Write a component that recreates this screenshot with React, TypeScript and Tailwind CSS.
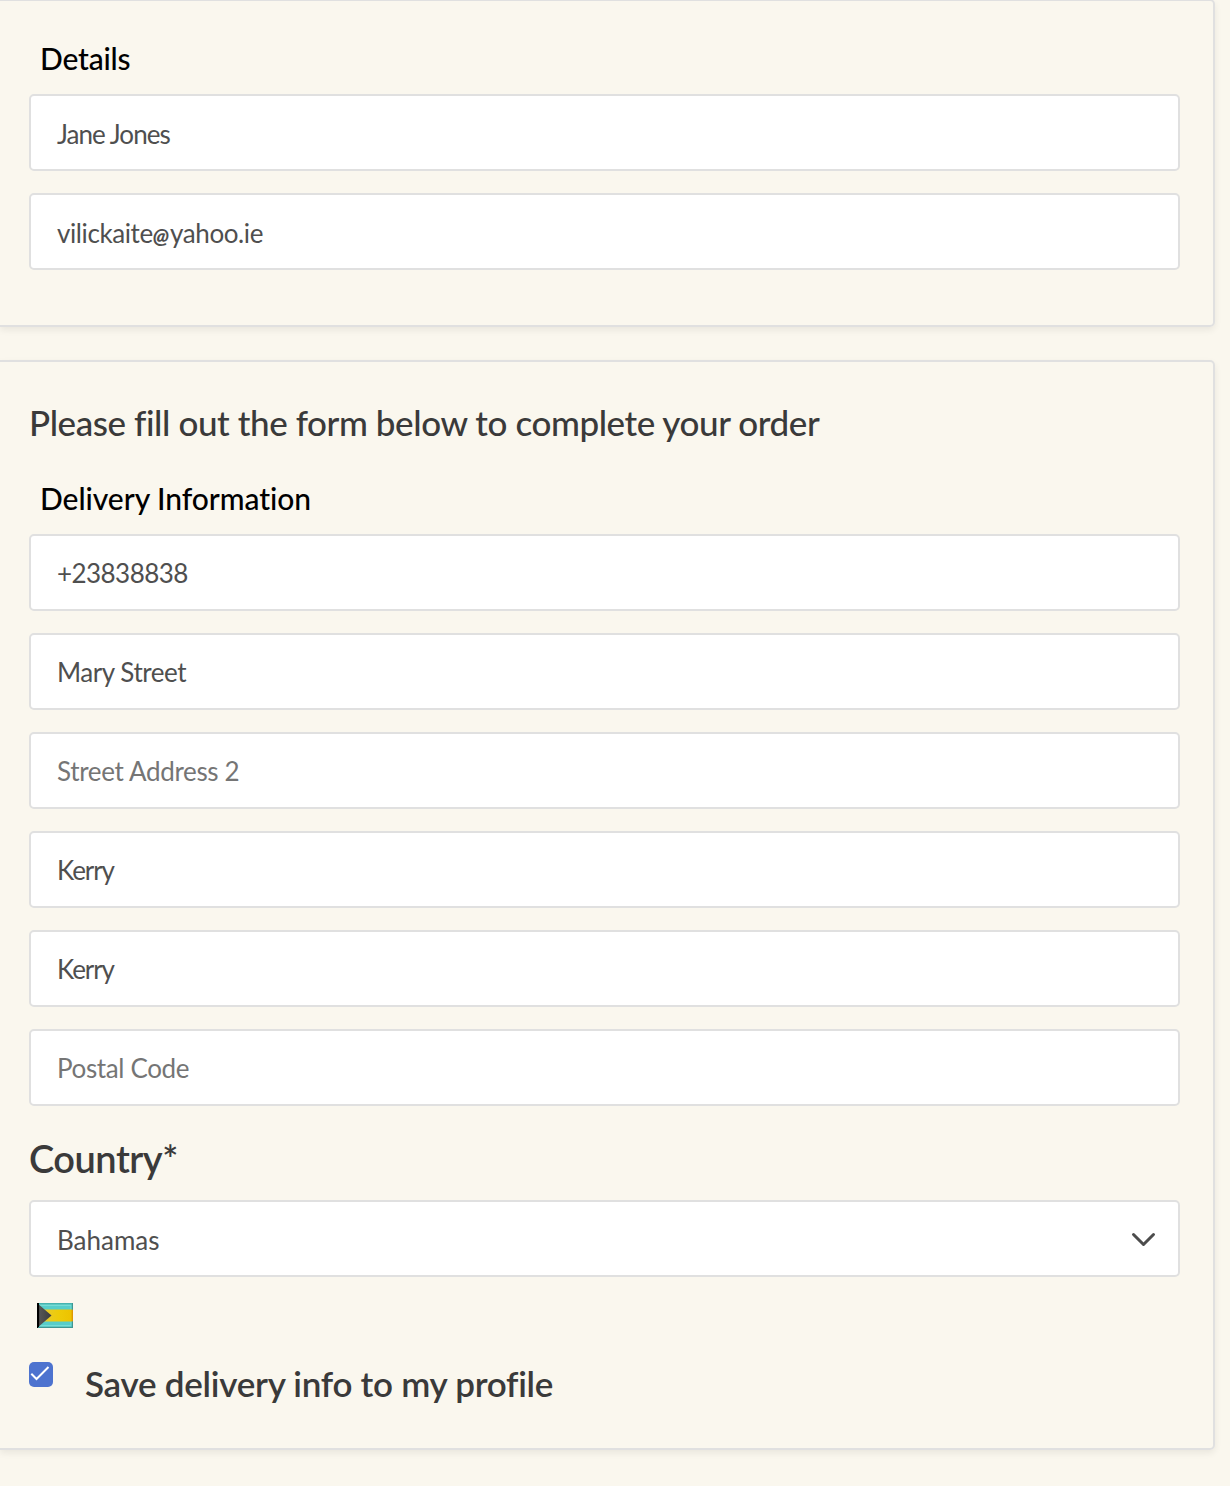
const card = "w-[1215px] border-2 border-l-0 border-[#e0e0e0] rounded-r-[5px] pl-[29px] pr-[33px] shadow-[0_3px_7px_rgba(0,0,0,0.07)]";
const box = "flex h-[77px] shrink-0 items-center justify-between rounded-[5px] border-2 border-[#e0e0e0] bg-white pl-[26px] pr-[22px] text-[26px] leading-none whitespace-nowrap";

function Field({ text, muted = false, tracking = "" }: { text: string; muted?: boolean; tracking?: string }) {
  return (
    <div className={`${box} ${muted ? "text-[#757575]" : "text-[#4f4f4f]"}`}>
      <span className={tracking}>{text}</span>
    </div>
  );
}

function Flag() {
  return (
    <svg width="36" height="25" viewBox="0 0 36 25" aria-label="Bahamas flag">
      <defs>
        <linearGradient id="gold" x1="0" x2="1" y1="0" y2="0">
          <stop offset="0" stopColor="#e5ca3c" />
          <stop offset="0.6" stopColor="#eecb08" />
          <stop offset="0.94" stopColor="#edc300" />
          <stop offset="1" stopColor="#d98b00" />
        </linearGradient>
        <linearGradient id="hoist" x1="0" x2="1" y1="0" y2="0">
          <stop offset="0" stopColor="#000" />
          <stop offset="0.2" stopColor="#555" />
          <stop offset="1" stopColor="#3c3c3c" />
        </linearGradient>
      </defs>
      <rect width="36" height="25" fill="#46b3af" />
      <rect x="1.5" y="1.5" width="33" height="22" fill="#74dcd6" />
      <rect x="3" y="3" width="30.5" height="19" fill="#57cdca" />
      <rect y="6.5" width="36" height="12" fill="url(#gold)" />
      <path d="M0 0L14.5 12.5L0 25Z" fill="url(#hoist)" />
      <path d="M0 0H2V25H0Z" fill="#000" />
      <path d="M1 24.5H36M35.5 18.5V25M35.5 0V6.5" stroke="#3f9692" strokeWidth="1" />
    </svg>
  );
}

export default function App() {
  return (
    <main className="h-[1486px] w-[1230px] overflow-hidden bg-[#faf7ee] font-['Lato',sans-serif]">
      <section className={`${card} -mt-px flex h-[328px] flex-col gap-[22px]`}>
        <div className="flex flex-col pt-[37px]">
          <h2 className="mb-[16px] h-10 pl-[11px] text-[30px] leading-10 font-medium text-black">
            <span className="tracking-[-0.2px]">Details</span>
          </h2>
          <Field text="Jane Jones" tracking="tracking-[-0.95px] word-spacing-[2px] pt-[2px]" />
        </div>
        <div className={`${box} text-[#4f4f4f]`}>
          <span className="pt-[2px] tracking-[-0.4px]">
            vilickaite<span className="text-[21px] leading-none font-black italic tracking-[1px]">@</span>yahoo.ie
          </span>
        </div>
      </section>
      <section className={`${card} mt-[33px] h-[1090px]`}>
        <p className="pt-[36px] text-[35px] leading-[48px] font-medium text-[#3a3a3a] whitespace-nowrap">
          <span className="tracking-[-0.42px]">Please fill out the form below to complete your order</span>
        </p>
        <h2 className="mt-[32px] mb-[16px] h-10 pl-[11px] text-[30px] leading-10 font-medium text-black">
          <span className="tracking-[-0.05px]">Delivery Information</span>
        </h2>
        <div className="flex flex-col gap-[22px]">
          <Field text="+23838838" tracking="tracking-[-0.55px]" />
          <Field text="Mary Street" tracking="tracking-[-0.45px]" />
          <Field text="Street Address 2" muted tracking="tracking-[-0.33px]" />
          <Field text="Kerry" tracking="tracking-[-1.1px]" />
          <Field text="Kerry" tracking="tracking-[-1.1px]" />
          <Field text="Postal Code" muted tracking="tracking-[-0.36px]" />
        </div>
        <h3 className="mt-[27px] h-[50px] text-[38px] leading-[50px] font-semibold text-[#3a3a3a]">
          <span className="tracking-[-0.5px]">Country*</span>
        </h3>
        <div className={`${box} mt-[17px] text-[#4f4f4f]`}>
          <span className="pt-[2px]">Bahamas</span>
          <svg className="mt-[2px]" width="25" height="16" viewBox="0 0 25 16" fill="none" stroke="#4c4c4c" strokeWidth="3" strokeLinecap="round" strokeLinejoin="round">
            <path d="M2.5 2.5L12.5 12.5L22.5 2.5" />
          </svg>
        </div>
        <div className="mt-[26px] ml-2 h-[25px]"><Flag /></div>
        <div className="mt-[31px] flex">
          <span className="mt-[3px] h-[25px] w-6 rounded-[5px] bg-[#4d73cf]">
            <svg width="24" height="25" viewBox="0 0 24 25" fill="none" stroke="white" strokeWidth="2">
              <path d="M2.3 11.8L7.5 17L19.5 5" />
            </svg>
          </span>
          <span className="ml-8 text-[35px] leading-[48px] font-semibold text-[#3a3a3a] whitespace-nowrap">
            <span className="tracking-[-0.26px]">Save delivery info to my profile</span>
          </span>
        </div>
      </section>
    </main>
  );
}
